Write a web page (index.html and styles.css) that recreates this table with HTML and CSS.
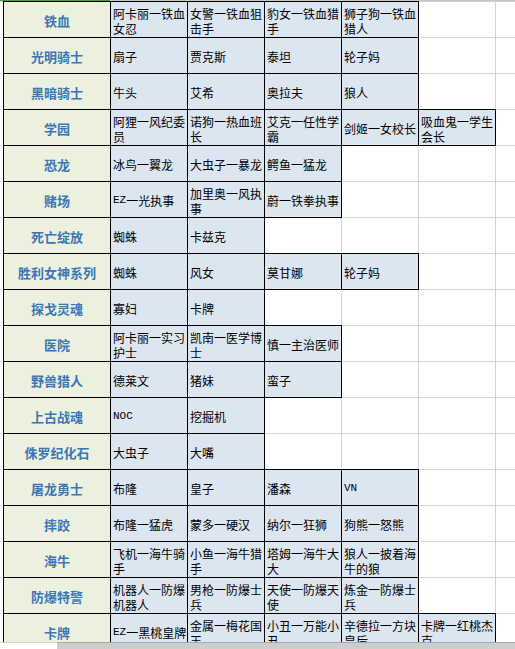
FILE: index.html
```html
<!DOCTYPE html>
<html lang="zh-CN">
<head>
<meta charset="utf-8">
<title>皮肤系列</title>
<link rel="stylesheet" href="styles.css">
</head>
<body>
<div class="colhead"><div class="colhead-sel"></div><div class="colhead-rest"></div></div>
<div class="sheet">
  <div class="grid">
    <div class="c"></div><div class="h">铁血</div><div class="d">阿卡丽一铁血女忍</div><div class="d">女警一铁血狙击手</div><div class="d">豹女一铁血猎手</div><div class="d">狮子狗一铁血猎人</div><div class="c"></div><div class="c"></div>
    <div class="c"></div><div class="h">光明骑士</div><div class="d">扇子</div><div class="d">贾克斯</div><div class="d">泰坦</div><div class="d">轮子妈</div><div class="c"></div><div class="c"></div>
    <div class="c"></div><div class="h">黑暗骑士</div><div class="d">牛头</div><div class="d">艾希</div><div class="d">奥拉夫</div><div class="d">狼人</div><div class="c"></div><div class="c"></div>
    <div class="c"></div><div class="h">学园</div><div class="d">阿狸一风纪委员</div><div class="d">诺狗一热血班长</div><div class="d">艾克一任性学霸</div><div class="d">剑姬一女校长</div><div class="d">吸血鬼一学生会长</div><div class="c"></div>
    <div class="c"></div><div class="h">恐龙</div><div class="d">冰鸟一翼龙</div><div class="d">大虫子一暴龙</div><div class="d">鳄鱼一猛龙</div><div class="c"></div><div class="c"></div><div class="c"></div>
    <div class="c"></div><div class="h">赌场</div><div class="d"><span class="lat">EZ</span>一光执事</div><div class="d">加里奥一风执事</div><div class="d">蔚一铁拳执事</div><div class="c"></div><div class="c"></div><div class="c"></div>
    <div class="c"></div><div class="h">死亡绽放</div><div class="d">蜘蛛</div><div class="d">卡兹克</div><div class="c"></div><div class="c"></div><div class="c"></div><div class="c"></div>
    <div class="c"></div><div class="h">胜利女神系列</div><div class="d">蜘蛛</div><div class="d">风女</div><div class="d">莫甘娜</div><div class="d">轮子妈</div><div class="c"></div><div class="c"></div>
    <div class="c"></div><div class="h">探戈灵魂</div><div class="d">寡妇</div><div class="d">卡牌</div><div class="c"></div><div class="c"></div><div class="c"></div><div class="c"></div>
    <div class="c"></div><div class="h">医院</div><div class="d">阿卡丽一实习护士</div><div class="d">凯南一医学博士</div><div class="d">慎一主治医师</div><div class="c"></div><div class="c"></div><div class="c"></div>
    <div class="c"></div><div class="h">野兽猎人</div><div class="d">德莱文</div><div class="d">猪妹</div><div class="d">蛮子</div><div class="c"></div><div class="c"></div><div class="c"></div>
    <div class="c"></div><div class="h">上古战魂</div><div class="d"><span class="lat">NOC</span></div><div class="d">挖掘机</div><div class="c"></div><div class="c"></div><div class="c"></div><div class="c"></div>
    <div class="c"></div><div class="h">侏罗纪化石</div><div class="d">大虫子</div><div class="d">大嘴</div><div class="c"></div><div class="c"></div><div class="c"></div><div class="c"></div>
    <div class="c"></div><div class="h">屠龙勇士</div><div class="d">布隆</div><div class="d">皇子</div><div class="d">潘森</div><div class="d"><span class="lat">VN</span></div><div class="c"></div><div class="c"></div>
    <div class="c"></div><div class="h">摔跤</div><div class="d">布隆一猛虎</div><div class="d">蒙多一硬汉</div><div class="d">纳尔一狂狮</div><div class="d">狗熊一怒熊</div><div class="c"></div><div class="c"></div>
    <div class="c"></div><div class="h">海牛</div><div class="d">飞机一海牛骑手</div><div class="d">小鱼一海牛猎手</div><div class="d">塔姆一海牛大大</div><div class="d">狼人一披着海牛的狼</div><div class="c"></div><div class="c"></div>
    <div class="c"></div><div class="h">防爆特警</div><div class="d">机器人一防爆机器人</div><div class="d">男枪一防爆士兵</div><div class="d">天使一防爆天使</div><div class="d">炼金一防爆士兵</div><div class="c"></div><div class="c"></div>
    <div class="c"></div><div class="h">卡牌</div><div class="d"><span class="lat">EZ</span>一黑桃皇牌</div><div class="d">金属一梅花国王</div><div class="d">小丑一万能小丑</div><div class="d">辛德拉一方块皇后</div><div class="d">卡牌一红桃杰克</div><div class="c"></div>
  </div>
</div>
<div class="hscroll"><div class="hscroll-gap"></div><div class="hscroll-bar"></div></div>
</body>
</html>
```

FILE: styles.css
```css
html, body {
  margin: 0;
  padding: 0;
}

body {
  width: 515px;
  height: 649px;
  overflow: hidden;
  display: flex;
  flex-direction: column;
  background: #ffffff;
  font-family: "Noto Sans CJK SC", "Noto Sans", sans-serif;
}

.colhead {
  display: flex;
  height: 1px;
  flex: none;
}

.colhead-sel {
  width: 110px;
  background: #4d9a3c;
}

.colhead-rest {
  flex: 1;
  background: #c8c8c8;
}

.sheet {
  flex: 1;
  min-height: 0;
  overflow: hidden;
}

.grid {
  display: grid;
  grid-template-columns: 3px 106px 76px 76px 76px 76px 76px 76px;
  grid-auto-rows: 35px;
  gap: 1px;
  padding-top: 1px;
  background: #d4d4d4;
  width: max-content;
}

.c {
  background: #ffffff;
}

.h {
  background: #ebf1de;
  box-shadow: 0 0 0 1px #000000;
  color: #3b76b6;
  font-weight: 700;
  font-size: 13px;
  display: flex;
  align-items: center;
  justify-content: center;
  padding-top: 2px;
  box-sizing: border-box;
  white-space: nowrap;
}

.d {
  background: #dce6f1;
  box-shadow: 0 0 0 1px #000000;
  color: #000000;
  font-size: 12px;
  line-height: 15px;
  display: flex;
  align-items: center;
  padding: 2px 0 0 2px;
  box-sizing: border-box;
  overflow: hidden;
}

.lat {
  font-family: "Liberation Mono", monospace;
  font-size: 11px;
}

.hscroll {
  flex: none;
  height: 7px;
  display: flex;
}

.hscroll-gap {
  width: 57px;
  background: #ffffff;
  border-top: 1px solid #d4d4d4;
}

.hscroll-bar {
  flex: 1;
  background: #cdcdcd;
  border-top: 1px solid #a9a9a9;
}
```
